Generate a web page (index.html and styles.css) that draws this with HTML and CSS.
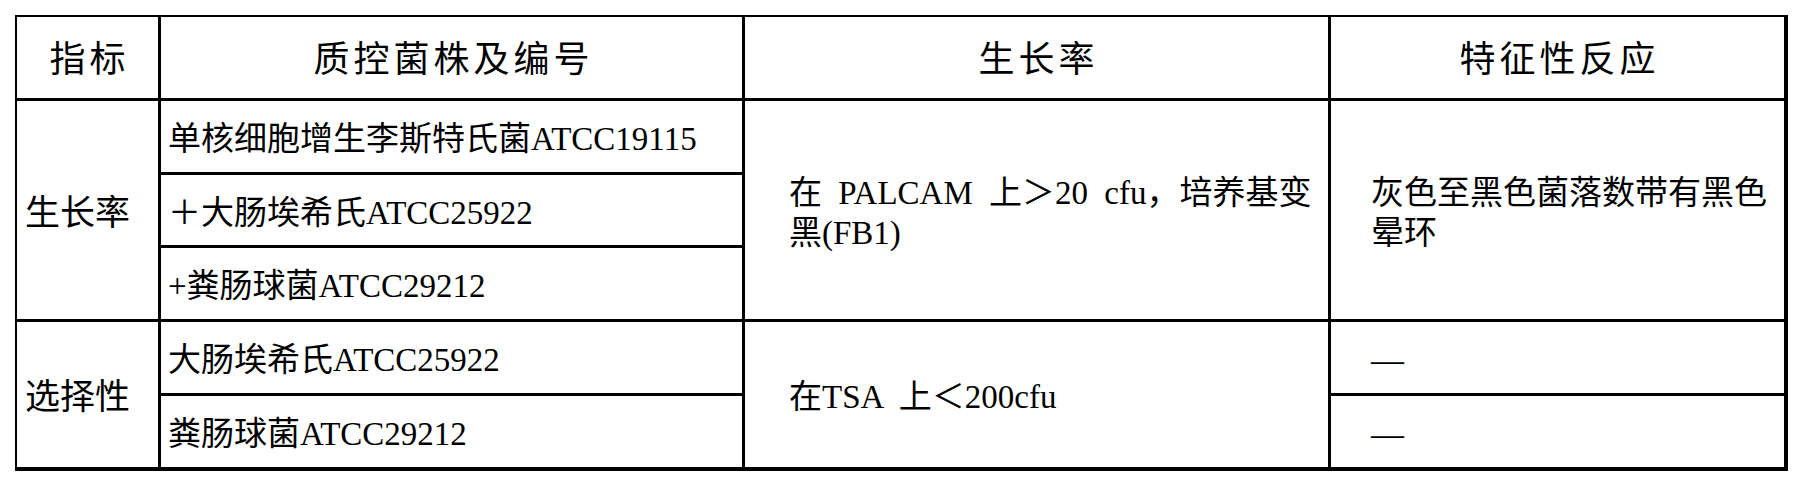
FILE: index.html
```html
<!DOCTYPE html>
<html lang="zh-CN">
<head>
<meta charset="utf-8">
<title>质控菌株</title>
<link rel="stylesheet" href="styles.css">
</head>
<body>
<div class="page">
  <table class="qc">
    <colgroup>
      <col class="c1">
      <col class="c2">
      <col class="c3">
      <col class="c4">
    </colgroup>
    <thead>
      <tr class="r0">
        <th>指标</th>
        <th>质控菌株及编号</th>
        <th>生长率</th>
        <th class="last">特征性反应</th>
      </tr>
    </thead>
    <tbody>
      <tr class="r1">
        <td rowspan="3" class="label">生长率</td>
        <td class="strain">单核细胞增生李斯特氏菌ATCC19115</td>
        <td rowspan="3" class="rate">在 PALCAM 上＞20 cfu，培养基变<br>黑(FB1)</td>
        <td rowspan="3" class="react last">灰色至黑色菌落数带有黑色晕环</td>
      </tr>
      <tr class="r2">
        <td class="strain">＋大肠埃希氏ATCC25922</td>
      </tr>
      <tr class="r3">
        <td class="strain">+粪肠球菌ATCC29212</td>
      </tr>
      <tr class="r4">
        <td rowspan="2" class="label bottom">选择性</td>
        <td class="strain">大肠埃希氏ATCC25922</td>
        <td rowspan="2" class="rate bottom">在TSA 上＜200cfu</td>
        <td class="react last">—</td>
      </tr>
      <tr class="r5">
        <td class="strain bottom">粪肠球菌ATCC29212</td>
        <td class="react last bottom">—</td>
      </tr>
    </tbody>
  </table>
</div>
</body>
</html>
```

FILE: styles.css
```css
html, body {
  margin: 0;
  padding: 0;
  background: #ffffff;
}

.page {
  padding: 15px 0 0 15px;
}

.qc {
  border-collapse: separate;
  border-spacing: 0;
  table-layout: fixed;
  width: 1773px;
  border-top: 2px solid #000;
  border-left: 2px solid #000;
  font-family: "Liberation Serif", "Noto Sans CJK SC", serif;
  color: #000;
}

.c1 { width: 144px; }
.c2 { width: 584px; }
.c3 { width: 586px; }
.c4 { width: 457px; }

.r0 { height: 84px; }
.r1 { height: 74px; }
.r2 { height: 73px; }
.r3 { height: 74px; }
.r4 { height: 74px; }
.r5 { height: 75px; }

.qc th,
.qc td {
  box-sizing: border-box;
  border-right: 3px solid #000;
  border-bottom: 3px solid #000;
  padding: 7px 0 0 0;
  vertical-align: middle;
  white-space: nowrap;
}

.qc .last {
  border-right-width: 4px;
}

.qc .bottom {
  border-bottom-width: 4px;
}

.qc th {
  font-size: 36px;
  font-weight: 400;
  letter-spacing: 4px;
  text-indent: 4px;
  text-align: center;
  line-height: 1.2;
}

.qc td {
  font-size: 33px;
  font-weight: 400;
  line-height: 1.2;
  text-align: left;
}

.qc td.label {
  font-size: 35px;
  font-weight: 400;
  padding-left: 8px;
}

.qc td.strain {
  padding-left: 7px;
}

.qc td.rate {
  padding-left: 44px;
  word-spacing: 8px;
}

.qc td.react {
  padding-left: 40px;
  white-space: normal;
}
```
